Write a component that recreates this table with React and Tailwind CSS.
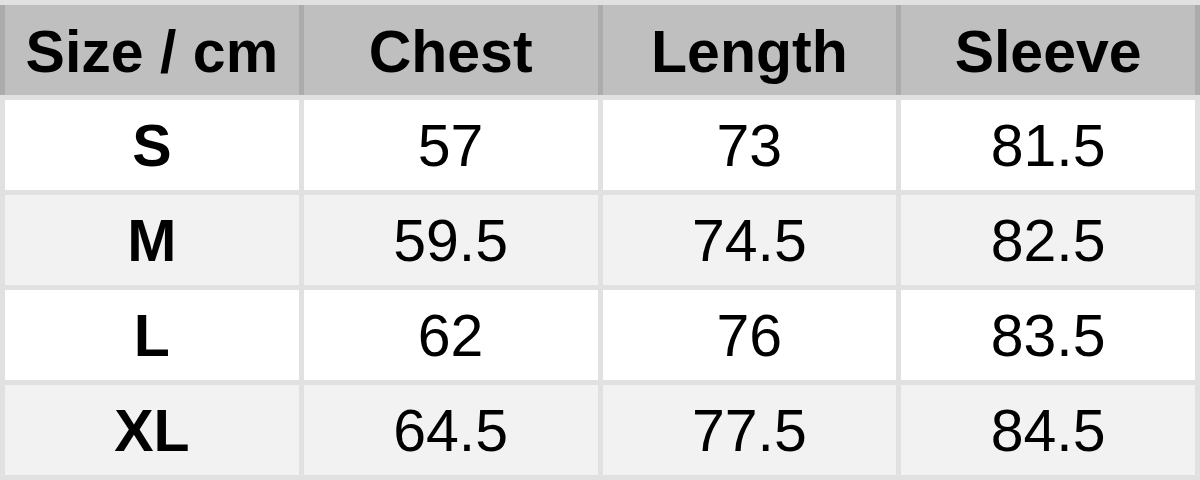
const header = ["Size / cm", "Chest", "Length", "Sleeve"]

const rows = [
    ["S", "57", "73", "81.5"],
    ["M", "59.5", "74.5", "82.5"],
    ["L", "62", "76", "83.5"],
    ["XL", "64.5", "77.5", "84.5"],
]

const App = () => {
    return (
        <div className="w-[1200px] h-[480px] bg-[#e1e1e1] py-[5px] flex flex-col gap-[5px] font-['Liberation_Sans',Arial,sans-serif] text-black text-[59px] leading-none">
            <div className="grid grid-cols-4 gap-[5px] px-[5px] h-[90px] bg-[#acacac]">
                {header.map((h) => (
                    <div key={h} className="bg-[#bfbfbf] flex items-center justify-center pt-[4px] font-bold">
                        {h}
                    </div>
                ))}
            </div>
            {rows.map((r, i) => (
                <div key={r[0]} className="grid grid-cols-4 gap-[5px] px-[5px] h-[90px]">
                    {r.map((c, j) => (
                        <div
                            key={j}
                            className={`flex items-center justify-center pt-[3px] ${i % 2 === 0 ? "bg-white" : "bg-[#f2f2f2]"} ${j === 0 ? "font-bold" : ""}`}
                        >
                            {c}
                        </div>
                    ))}
                </div>
            ))}
        </div>
    )
}

export default App
